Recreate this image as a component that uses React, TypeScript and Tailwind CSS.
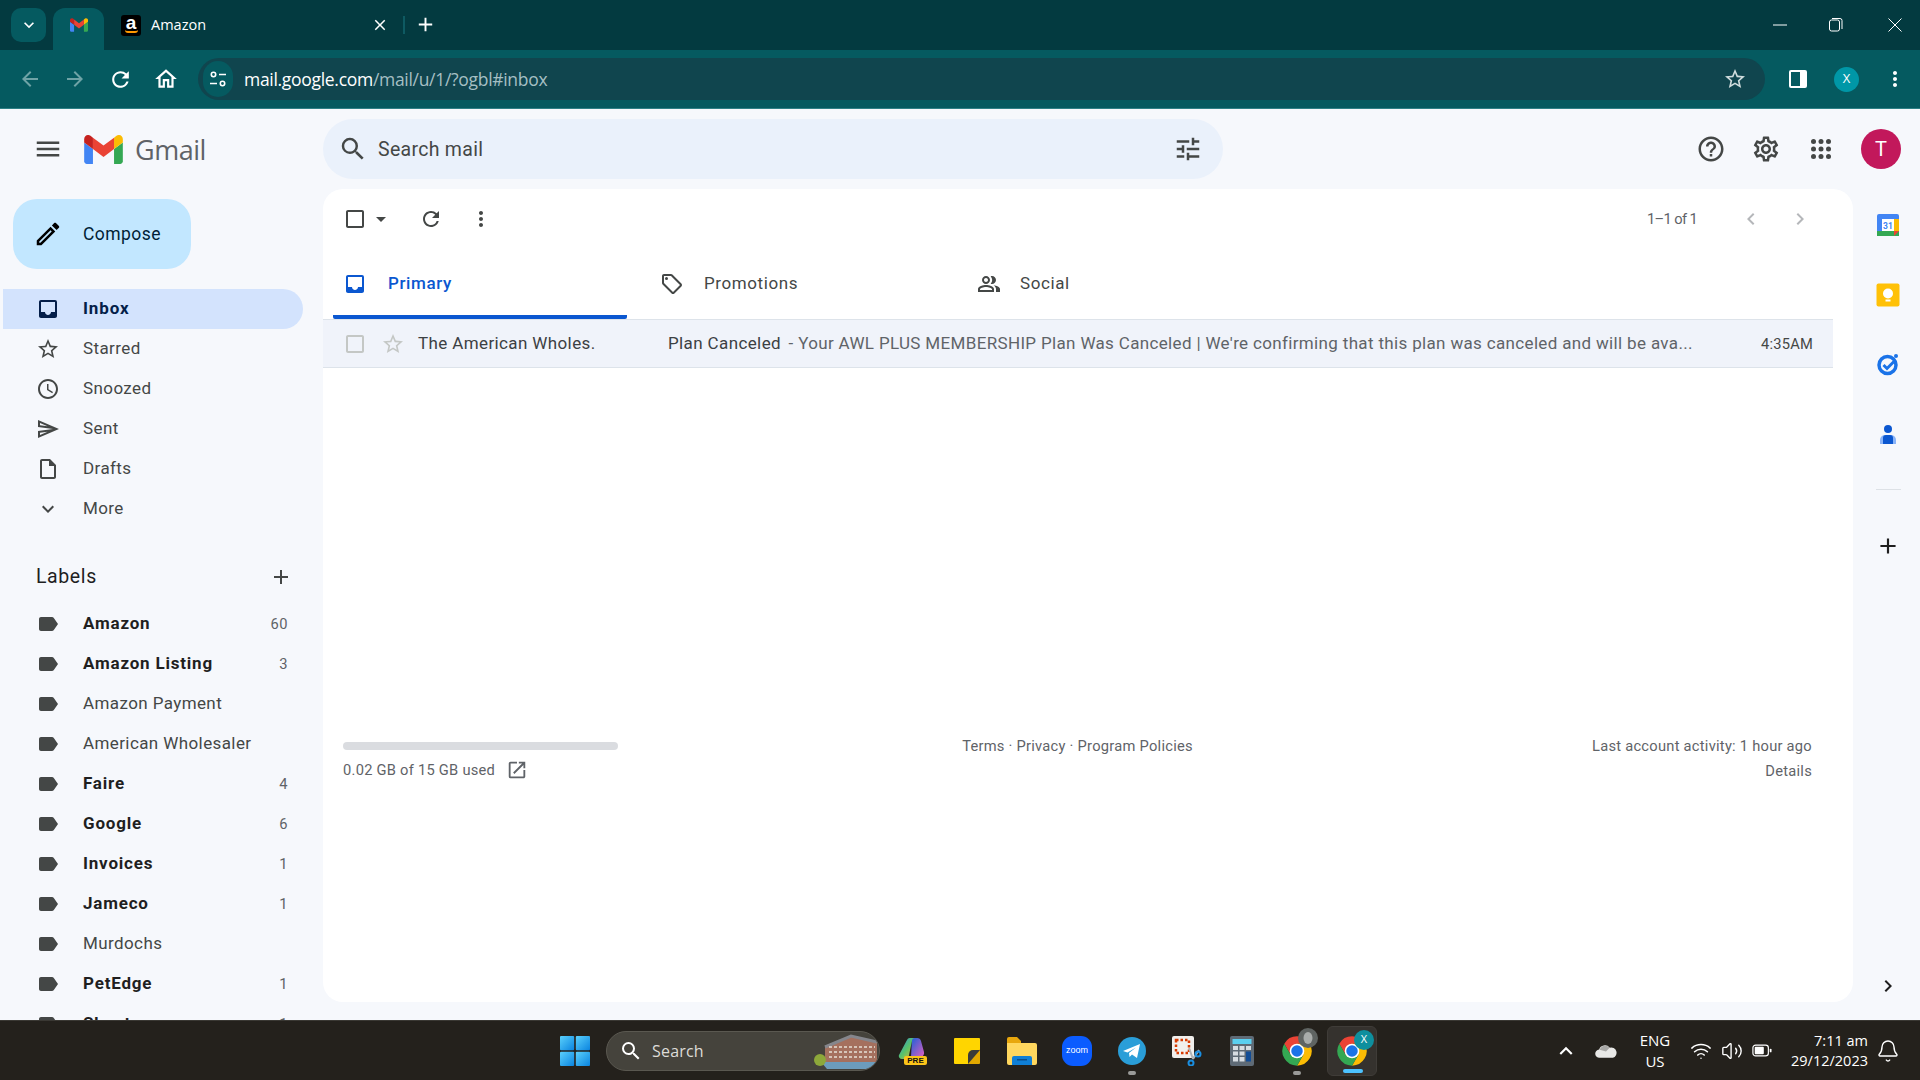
import type { ReactNode } from "react";
import { Bell, Volume2, Wifi } from "lucide-react";
import {
  MdAdd,
  MdArrowBack,
  MdArrowDropDown,
  MdArrowForward,
  MdCheckBoxOutlineBlank,
  MdChevronLeft,
  MdChevronRight,
  MdClose,
  MdExpandMore,
  MdHelpOutline,
  MdInbox,
  MdKeyboardArrowUp,
  MdLabel,
  MdMenu,
  MdMoreVert,
  MdOpenInNew,
  MdOutlineAccessTime,
  MdOutlineCreate,
  MdOutlineHome,
  MdOutlineInsertDriveFile,
  MdOutlineLocalOffer,
  MdOutlinePeopleAlt,
  MdOutlineSend,
  MdOutlineSettings,
  MdRefresh,
  MdSearch,
  MdStarBorder,
  MdTune,
} from "react-icons/md";

const navItems = [
  { name: "Starred", icon: MdStarBorder },
  { name: "Snoozed", icon: MdOutlineAccessTime },
  { name: "Sent", icon: MdOutlineSend },
  { name: "Drafts", icon: MdOutlineInsertDriveFile },
  { name: "More", icon: MdExpandMore },
];

const labels = [
  { name: "Amazon", count: 60 },
  { name: "Amazon Listing", count: 3 },
  { name: "Amazon Payment" },
  { name: "American Wholesaler" },
  { name: "Faire", count: 4 },
  { name: "Google", count: 6 },
  { name: "Invoices", count: 1 },
  { name: "Jameco", count: 1 },
  { name: "Murdochs" },
  { name: "PetEdge", count: 1 },
  { name: "Sheets", count: 1 },
];

function GmailLogo({ className }: { className: string }) {
  return (
    <svg viewBox="52 42 88 66" className={className}>
      <path fill="#4285f4" d="M58 108h14V74L52 59v43c0 3.32 2.69 6 6 6" />
      <path fill="#34a853" d="M120 108h14c3.32 0 6-2.69 6-6V59l-20 15" />
      <path fill="#fbbc04" d="M120 48v26l20-15v-8c0-7.42-8.47-11.65-14.4-7.2" />
      <path fill="#ea4335" d="M72 74V48l24 18 24-18v26L96 92" />
      <path fill="#c5221f" d="M52 51v8l20 15V48l-5.6-4.2c-5.94-4.45-14.4-.22-14.4 7.2" />
    </svg>
  );
}

function ChromeLogo() {
  return (
    <svg viewBox="0 0 24 24" className="w-[32px] h-[32px]">
      <path fill="#ea4335" d="M2.47 6.5A11 11 0 0 1 21.53 6.5H12L7.24 14.75Z" />
      <path fill="#fbbc04" d="M21.53 6.5A11 11 0 0 1 12 23L16.76 14.75 12 6.5Z" />
      <path fill="#34a853" d="M12 23A11 11 0 0 1 2.47 6.5L7.24 14.75H16.76Z" />
      <circle cx="12" cy="12" r="5.5" fill="#fff" />
      <circle cx="12" cy="12" r="4.3" fill="#1a73e8" />
    </svg>
  );
}

function AppsIcon() {
  const spots = [6, 12, 18];
  return (
    <svg viewBox="0 0 24 24" className="ml-[25px] w-[30px] h-[30px]">
      {spots.map((y) =>
        spots.map((x) => <circle key={`${x}-${y}`} cx={x} cy={y} r="2" fill="currentColor" />),
      )}
    </svg>
  );
}

function TabStrip() {
  return (
    <div className="h-[50px] shrink-0 bg-[#033a40] flex items-start text-white font-['Open_Sans',sans-serif]">
      <div className="ml-[11px] mt-[8px] w-[35px] h-[34px] rounded-[10px] bg-[#055a60] flex items-center justify-center">
        <MdExpandMore className="w-[20px] h-[20px]" />
      </div>
      <div className="ml-[7px] mt-[8px] w-[51px] h-[42px] rounded-t-[12px] bg-[#055a60] flex items-start justify-center pt-[10px]">
        <GmailLogo className="w-[18px] h-[14px]" />
      </div>
      <div className="ml-[17px] mt-[15px] w-[20px] h-[21px] rounded-[3px] bg-black flex flex-col items-center leading-none">
        <span className="text-[19px] font-bold leading-[15px] font-['Liberation_Sans',sans-serif]">a</span>
        <span className="w-[13px] h-[3px] border-b-2 border-[#f90] rounded-b-full" />
      </div>
      <span className="ml-[10px] mt-[14px] w-[220px] text-[14.5px] leading-[22px]">Amazon</span>
      <MdClose className="mt-[16px] w-[18px] h-[18px]" />
      <div className="ml-[14px] mt-[16px] w-[2px] h-[18px] bg-[#0e5a62]" />
      <MdAdd className="ml-[9px] mt-[13px] w-[23px] h-[23px]" />
      <div className="ml-auto flex mt-[13px]">
        <svg viewBox="0 0 14 14" className="w-[14px] h-[24px] mr-[42px]">
          <path d="M0 7h14" stroke="#fff" strokeWidth="1" />
        </svg>
        <svg viewBox="0 0 14 14" className="w-[14px] h-[24px] mr-[45px]">
          <rect x="0.5" y="2" width="10" height="11" rx="2" fill="none" stroke="#fff" />
          <path d="M3 0.5h8a2 2 0 0 1 2 2V11" fill="none" stroke="#fff" />
        </svg>
        <svg viewBox="0 0 14 14" className="w-[14px] h-[24px] mr-[18px]">
          <path d="M0.5 0.5l13 13M13.5 0.5l-13 13" stroke="#fff" strokeWidth="1" />
        </svg>
      </div>
    </div>
  );
}

function AddressBar() {
  return (
    <div className="h-[59px] shrink-0 bg-[#055a60] border-b border-[#2d8086] flex items-center text-white font-['Open_Sans',sans-serif]">
      <MdArrowBack className="ml-[18px] w-[24px] h-[24px] text-[#6fa3a6]" />
      <MdArrowForward className="ml-[21px] w-[24px] h-[24px] text-[#6fa3a6]" />
      <MdRefresh className="ml-[21px] w-[25px] h-[25px]" />
      <MdOutlineHome className="ml-[20px] w-[26px] h-[26px]" />
      <div className="ml-[19px] w-[1567px] h-[42px] rounded-full bg-[#10454e] flex items-center">
        <div className="ml-[5px] w-[30px] h-[36px] rounded-full bg-[#055a60] flex items-center justify-center">
          <svg viewBox="0 0 18 18" className="w-[18px] h-[18px]" fill="none" stroke="#fff" strokeWidth="1.6">
            <circle cx="4.5" cy="4.5" r="2.2" />
            <path d="M10 4.5h7M1 13.5h7" />
            <circle cx="13.5" cy="13.5" r="2.2" />
          </svg>
        </div>
        <span className="ml-[11px] text-[17.5px] tracking-[-0.3px]">
          mail.google.com<span className="text-[#a5bfc3]">/mail/u/1/?ogbl#inbox</span>
        </span>
        <MdStarBorder className="ml-auto mr-[18px] w-[24px] h-[24px] text-[#d0dcdd]" />
      </div>
      <div className="ml-[24px] w-[18px] h-[18px] rounded-[2px] bg-white flex">
        <div className="ml-[2px] mt-[2px] w-[9px] h-[14px] bg-[#055a60]" />
      </div>
      <div className="ml-[27px] w-[25px] h-[25px] rounded-full bg-[#0097a7] flex items-center justify-center text-[13px]">
        X
      </div>
      <MdMoreVert className="ml-[24px] w-[24px] h-[24px]" />
    </div>
  );
}

function GmailHeader() {
  return (
    <div className="h-[80px] shrink-0 flex items-center">
      <MdMenu className="ml-[33px] w-[30px] h-[30px] text-[#444746]" />
      <GmailLogo className="ml-[21px] w-[39px] h-[29px]" />
      <span className="ml-[12px] w-[188px] text-[27px] leading-none tracking-[-0.5px] text-[#5f6368] font-['Open_Sans',sans-serif]">
        Gmail
      </span>
      <div className="w-[900px] h-[60px] rounded-[30px] bg-[#eaf1fb] flex items-center">
        <MdSearch className="ml-[15px] w-[30px] h-[30px] text-[#444746]" />
        <span className="ml-[10px] pt-[1px] text-[19.5px] tracking-[0.3px] text-[#444746]">Search mail</span>
        <MdTune className="ml-auto mr-[20px] w-[30px] h-[30px] text-[#444746]" />
      </div>
      <div className="ml-auto flex items-center text-[#444746]">
        <MdHelpOutline className="w-[30px] h-[30px]" />
        <MdOutlineSettings className="ml-[25px] w-[30px] h-[30px]" />
        <AppsIcon />
        <div className="ml-[25px] mr-[19px] w-[40px] h-[40px] rounded-full bg-[#c2185b] flex items-center justify-center text-white text-[20px]">
          T
        </div>
      </div>
    </div>
  );
}

function Sidebar() {
  return (
    <aside className="w-[323px] shrink-0 pt-[10px] overflow-hidden text-[#444746]">
      <div className="ml-[13px] w-[178px] h-[70px] rounded-[24px] bg-[#c2e7ff] flex items-center text-[#001d35]">
        <MdOutlineCreate className="ml-[20px] w-[30px] h-[30px] text-black" />
        <span className="ml-[20px] text-[17.5px] tracking-[0.45px]">Compose</span>
      </div>
      <nav className="mt-[20px]">
        <div className="ml-[3px] w-[300px] h-[40px] rounded-r-full bg-[#d3e3fd] flex items-center text-[#041e49] font-bold">
          <MdInbox className="ml-[33px] w-[24px] h-[24px]" />
          <span className="ml-[23px] text-[17px] tracking-[0.9px]">Inbox</span>
        </div>
        {navItems.map((item) => (
          <div key={item.name} className="ml-[3px] h-[40px] flex items-center">
            <item.icon className="ml-[33px] w-[24px] h-[24px]" />
            <span className="ml-[23px] text-[17px] tracking-[0.4px]">{item.name}</span>
          </div>
        ))}
      </nav>
      {/* Labels */}
      <div className="mt-[28px] h-[40px] flex items-center pl-[36px] pr-[30px] text-[#1f1f1f]">
        <span className="text-[19.5px] tracking-[0.6px]">Labels</span>
        <MdAdd className="ml-auto w-[24px] h-[24px] text-[#444746]" />
      </div>
      <div className="mt-[7px]">
        {labels.map((label) => (
          <div key={label.name} className="h-[40px] flex items-center pr-[35px]">
            <MdLabel className="ml-[36px] w-[24px] h-[24px]" />
            <span
              className={`ml-[23px] text-[17px] ${
                label.count ? "font-bold tracking-[0.8px] text-[#1f1f1f]" : "tracking-[0.4px]"
              }`}
            >
              {label.name}
            </span>
            {label.count && (
              <span className="ml-auto text-[14.7px] tracking-[0.5px] text-[#5f6368]">{label.count}</span>
            )}
          </div>
        ))}
      </div>
    </aside>
  );
}

function Tab({ icon, active, children }: { icon: ReactNode; active?: boolean; children: ReactNode }) {
  return (
    <div
      className={`w-[294px] mr-[22px] h-full pl-[10px] flex items-center gap-[21px] text-[17px] tracking-[0.6px] pb-[6px] border-b-4 rounded-b-[2px] ${
        active ? "border-[#0b57d0] text-[#0b57d0] font-medium" : "border-transparent text-[#444746]"
      }`}
    >
      {icon}
      <span>{children}</span>
    </div>
  );
}

function MailCard() {
  return (
    <main className="flex-1 mb-[18px] rounded-[20px] bg-white flex flex-col text-[#444746]">
      <div className="h-[69px] shrink-0 flex items-center pb-[10px] pr-[41px]">
        <MdCheckBoxOutlineBlank className="ml-[20px] w-[24px] h-[24px]" />
        <MdArrowDropDown className="ml-[2px] w-[24px] h-[24px]" />
        <MdRefresh className="ml-[26px] w-[24px] h-[24px]" />
        <MdMoreVert className="ml-[26px] w-[24px] h-[24px]" />
        <span className="ml-auto pt-[1px] text-[14.7px] tracking-[-0.65px] text-[#5f6368]">1–1 of 1</span>
        <MdChevronLeft className="ml-[42px] w-[24px] h-[24px] text-[#b5b7ba]" />
        <MdChevronRight className="ml-[25px] w-[24px] h-[24px] text-[#b5b7ba]" />
      </div>
      <div className="h-[61px] shrink-0 ml-[10px] flex">
        <Tab active icon={<MdInbox className="w-[24px] h-[24px]" />}>
          Primary
        </Tab>
        <Tab icon={<MdOutlineLocalOffer className="ml-[1px] mr-[-1px] w-[24px] h-[24px]" />}>Promotions</Tab>
        <Tab icon={<MdOutlinePeopleAlt className="ml-[2px] mr-[-2px] w-[24px] h-[24px]" />}>Social</Tab>
      </div>
      {/* Mail row */}
      <div className="h-[49px] shrink-0 mr-[20px] pt-[1px] bg-[#f0f3fa] border-t border-b border-[#dde3ea] flex items-center text-[17px] tracking-[0.38px]">
        <MdCheckBoxOutlineBlank className="ml-[20px] w-[24px] h-[24px] text-[#c4c7c5]" />
        <MdStarBorder className="ml-[14px] w-[24px] h-[24px] text-[#c4c7c5]" />
        <span className="ml-[13px] w-[250px] text-[#3c4043]">The American Wholes.</span>
        <span className="flex-1 truncate text-[#3c4043]">
          Plan Canceled<span className="ml-[3px] tracking-[0.34px] text-[#5f6368]"> - Your AWL PLUS MEMBERSHIP Plan Was Canceled | We're confirming that this plan was canceled and will be ava...</span>
        </span>
        <span className="ml-[66px] mr-[20px] text-[14.7px] tracking-[0.2px] text-[#444746]">4:35AM</span>
      </div>
      {/* Footer */}
      <div className="mt-[366px] ml-[20px] mr-[41px] grid grid-cols-3 text-[14.7px] tracking-[0.25px] text-[#5f6368]">
        <div>
          <div className="mt-[8px] w-[275px] h-[8px] rounded-full bg-[#dadce0]" />
          <div className="mt-[9px] flex items-center">
            0.02 GB of 15 GB used
            <MdOpenInNew className="ml-[11px] w-[22px] h-[22px]" />
          </div>
        </div>
        <div className="pt-[1px] text-center">Terms · Privacy · Program Policies</div>
        <div className="text-right leading-[25px]">
          <div>Last account activity: 1 hour ago</div>
          <div>Details</div>
        </div>
      </div>
    </main>
  );
}

function RightRail() {
  return (
    <aside className="w-[67px] shrink-0 pl-[3px] flex flex-col items-center pb-[22px]">
      {/* Calendar */}
      <svg viewBox="0 0 24 24" className="mt-[24px] w-[24px] h-[24px]">
        <rect x="1" y="1" width="22" height="22" rx="2" fill="#4285f4" />
        <rect x="18" y="6" width="5" height="12" fill="#fbbc04" />
        <rect x="1" y="18" width="22" height="5" fill="#34a853" />
        <path d="M18 18h5l-5 5z" fill="#ea4335" />
        <rect x="6" y="6" width="12" height="12" fill="#fff" />
        <text x="12" y="15.5" fontSize="8.5" fontWeight="700" textAnchor="middle" fill="#4285f4" fontFamily="Roboto, sans-serif">31</text>
      </svg>
      {/* Keep */}
      <svg viewBox="0 0 24 24" className="mt-[46px] w-[24px] h-[24px]">
        <rect x="0.5" y="0.5" width="23" height="23" rx="2" fill="#ffc107" />
        <circle cx="12" cy="10.5" r="5" fill="#fff" />
        <rect x="9.5" y="16.5" width="5" height="2" fill="#fff" />
      </svg>
      {/* Tasks */}
      <svg viewBox="0 0 24 24" className="mt-[45px] w-[24px] h-[24px]">
        <circle cx="11.5" cy="13" r="8.5" fill="none" stroke="#1a73e8" strokeWidth="3.5" />
        <path d="M7.5 13l3.5 3.5 8-8" fill="none" stroke="#1a73e8" strokeWidth="3" />
        <circle cx="20" cy="4" r="2" fill="#1a73e8" />
      </svg>
      {/* Contacts */}
      <svg viewBox="0 0 24 24" className="mt-[47px] w-[24px] h-[24px]">
        <circle cx="12" cy="6" r="4" fill="#0b57d0" />
        <path d="M4 21v-4a5 5 0 0 1 5-5h6a5 5 0 0 1 5 5v4z" fill="#8ab4f8" />
        <path d="M7 21v-6a3 3 0 0 1 3-3h4a3 3 0 0 1 3 3v6z" fill="#0b57d0" />
      </svg>
      <div className="mt-[42px] w-[25px] h-px bg-[#dde1e6]" />
      <MdAdd className="mt-[43px] w-[26px] h-[26px] text-[#1f1f1f]" />
      <MdChevronRight className="mt-auto w-[24px] h-[24px] text-[#1f1f1f]" />
    </aside>
  );
}

function Taskbar() {
  return (
    <footer className="h-[60px] shrink-0 bg-[#24211c] border-t border-[#3a3833] flex items-center text-white font-['Open_Sans',sans-serif] relative">
      {/* Start */}
      <svg viewBox="0 0 30 30" className="ml-[560px] w-[30px] h-[30px]">
        <defs>
          <linearGradient id="win" x1="0" y1="0" x2="1" y2="1">
            <stop offset="0" stopColor="#5ad0fb" />
            <stop offset="1" stopColor="#0a84e0" />
          </linearGradient>
        </defs>
        <rect x="0" y="0" width="14.2" height="14.2" rx="1" fill="url(#win)" />
        <rect x="15.8" y="0" width="14.2" height="14.2" rx="1" fill="url(#win)" />
        <rect x="0" y="15.8" width="14.2" height="14.2" rx="1" fill="url(#win)" />
        <rect x="15.8" y="15.8" width="14.2" height="14.2" rx="1" fill="url(#win)" />
      </svg>
      {/* Search */}
      <div className="ml-[16px] w-[274px] h-[40px] rounded-full bg-[#45433c] border border-[#5a5850] flex items-center overflow-hidden">
        <MdSearch className="ml-[12px] w-[24px] h-[24px]" />
        <span className="ml-[9px] text-[16px] tracking-[0.2px] text-[#dddcd8]">Search</span>
        <svg viewBox="0 0 68 36" className="ml-auto w-[68px] h-[36px]">
          <path d="M14 14L40 3 66 9V29H14Z" fill="#a5705e" />
          <path d="M14 14L40 3 66 9" fill="none" stroke="#85868c" strokeWidth="3" />
          <path d="M18 14H64M18 19H64M18 24H64" stroke="#e6e0d6" strokeWidth="1.6" strokeDasharray="3 2" />
          <path d="M10 29H66L60 36H16Z" fill="#6c9cbc" />
          <circle cx="9" cy="27" r="6" fill="#8da83a" />
        </svg>
      </div>
      {/* Copilot */}
      <div className="ml-[18px] w-[28px] h-[28px] relative">
        <svg viewBox="0 0 28 28" className="w-full h-full">
          <defs>
            <linearGradient id="cop" x1="0" y1="0" x2="1" y2="1">
              <stop offset="0" stopColor="#2f8fe6" />
              <stop offset="0.5" stopColor="#58c26a" />
              <stop offset="1" stopColor="#e9b535" />
            </linearGradient>
            <linearGradient id="cop2" x1="0" y1="0" x2="1" y2="1">
              <stop offset="0" stopColor="#1b60d8" />
              <stop offset="1" stopColor="#e05fc0" />
            </linearGradient>
          </defs>
          <path d="M14 1h5a4 4 0 0 1 4 3l3 11a4 4 0 0 1-4 5h-9z" fill="url(#cop2)" />
          <path d="M9 3a3 3 0 0 1 3-2h5a3 3 0 0 0-3 3l-3 14a4 4 0 0 1-4 4H4a3 3 0 0 1-3-4z" fill="url(#cop)" />
        </svg>
        <span className="absolute left-[6px] top-[19px] w-[23px] h-[9px] rounded-[2px] bg-[#fcc419] text-[#111] text-[8px] font-bold leading-[9px] text-center font-['Liberation_Sans',sans-serif]">
          PRE
        </span>
      </div>
      {/* Sticky notes */}
      <svg viewBox="0 0 26 26" className="ml-[28px] w-[26px] h-[26px]">
        <path d="M1 0h24a1 1 0 0 1 1 1v15L16 26H1a1 1 0 0 1-1-1V1a1 1 0 0 1 1-1z" fill="#ffd500" />
        <path d="M26 11v14a1 1 0 0 1-1 1H14z" fill="#e2a800" />
        <path d="M26 12L14 26V17a5 5 0 0 1 5-5z" fill="#3a3a3a" />
      </svg>
      {/* Explorer */}
      <svg viewBox="0 0 30 28" className="ml-[27px] w-[30px] h-[28px]">
        <path d="M0 2a2 2 0 0 1 2-2h8l4 4v6H0z" fill="#e8a70d" />
        <path d="M0 6h28a2 2 0 0 1 2 2v18a2 2 0 0 1-2 2H2a2 2 0 0 1-2-2z" fill="#ffd75e" />
        <path d="M5 21a2 2 0 0 1 2-2h16a2 2 0 0 1 2 2v7H5z" fill="#0f7fd6" />
        <rect x="10" y="22" width="10" height="1.5" fill="#0a4f8c" />
      </svg>
      {/* Zoom */}
      <div className="ml-[25px] w-[30px] h-[30px] rounded-[11px] bg-[#0b5cff] flex items-center justify-center text-[9px] font-['Liberation_Sans',sans-serif]">
        zoom
      </div>
      {/* Telegram */}
      <div className="ml-[26px] relative">
        <svg viewBox="0 0 28 28" className="w-[28px] h-[28px]">
          <circle cx="14" cy="14" r="14" fill="#2a9ed8" />
          <path d="M5 14L22 7 19 21 14 17.5 11.5 20 11 16 18 10.5 9.5 15.5z" fill="#fff" />
        </svg>
        <span className="absolute left-[10px] top-[34px] w-[8px] h-[4px] rounded-full bg-[#9a9a98]" />
      </div>
      {/* Snipping tool */}
      <svg viewBox="0 0 30 30" className="ml-[26px] w-[30px] h-[30px]">
        <rect x="0" y="0" width="22" height="22" rx="2" fill="#f1efec" />
        <rect x="4" y="4" width="13" height="13" fill="none" stroke="#d83b01" strokeWidth="2.5" strokeDasharray="2.5 2" />
        <path d="M17 12l4 11M27 14l-6 9" stroke="#b0b3b6" strokeWidth="2" />
        <circle cx="26" cy="18" r="2.5" fill="none" stroke="#1a8ee0" strokeWidth="2" />
        <circle cx="19" cy="27" r="2.5" fill="none" stroke="#1a8ee0" strokeWidth="2" />
      </svg>
      {/* Calculator */}
      <svg viewBox="0 0 24 30" className="ml-[28px] w-[24px] h-[30px]">
        <rect width="24" height="30" rx="2" fill="#5f6b76" />
        <rect x="2.5" y="3" width="19" height="5" fill="#5bd0f0" />
        <path d="M3 10h5v4H3zM9.5 10h5v4h-5zM16 10h5v4h-5zM3 15.5h5v4H3zM9.5 15.5h5v4h-5zM3 21h5v4.5H3zM9.5 21h5v4.5h-5z" fill="#d7dde2" />
        <rect x="16" y="15.5" width="5" height="10" fill="#124d96" />
      </svg>
      {/* Chrome with profile */}
      <div className="ml-[27px] w-[32px] h-[32px] relative">
        <ChromeLogo />
        <svg viewBox="0 0 20 20" className="absolute left-[17px] top-[-7px] w-[20px] h-[20px]">
          <circle cx="10" cy="10" r="10" fill="#5f6462" />
          <ellipse cx="10" cy="10" rx="4.5" ry="6" fill="#a9adab" />
        </svg>
        <span className="absolute left-[12px] top-[36px] w-[8px] h-[4px] rounded-full bg-[#9a9a98]" />
      </div>
      {/* Active chrome */}
      <div className="ml-[14px] w-[50px] h-[50px] rounded-[6px] bg-[#35322e] border border-[#3f3c38] flex items-center justify-center relative">
        <ChromeLogo />
        <span className="absolute left-[26px] top-[3px] w-[20px] h-[20px] rounded-full bg-[#0e8f9e] flex items-center justify-center text-[11px]">
          X
        </span>
        <span className="absolute left-[15px] bottom-[2px] w-[20px] h-[4px] rounded-full bg-[#4cc2ff]" />
      </div>
      {/* Tray */}
      <MdKeyboardArrowUp className="ml-[176px] w-[26px] h-[26px]" />
      <svg viewBox="0 0 24 16" className="ml-[16px] w-[22px] h-[15px]">
        <path d="M5 16a4.5 4.5 0 0 1-.5-9A6.5 6.5 0 0 1 16 5a5.5 5.5 0 0 1 3.5 11z" fill="#e8e8e6" />
        <path d="M5 7.2A6.5 6.5 0 0 1 16 5l-4 4z" fill="#a8a8a6" />
      </svg>
      <div className="ml-[18px] w-[40px] text-center text-[15px] leading-[21px]">
        <div>ENG</div>
        <div>US</div>
      </div>
      <Wifi className="ml-[15px] w-[22px] h-[22px]" strokeWidth={1.7} />
      <Volume2 className="ml-[9px] w-[22px] h-[22px]" strokeWidth={1.5} />
      <svg viewBox="0 0 22 14" className="ml-[9px] w-[20px] h-[13px]">
        <rect x="1" y="1" width="17" height="12" rx="3" fill="none" stroke="#fff" strokeWidth="1.3" />
        <rect x="3" y="3" width="10" height="8" rx="1" fill="#fff" />
        <rect x="19.5" y="5" width="2" height="4" rx="1" fill="#fff" />
      </svg>
      <div className="ml-auto text-right text-[14.5px] leading-[20px]">
        <div>7:11 am</div>
        <div>29/12/2023</div>
      </div>
      <Bell className="ml-[8px] mr-[20px] w-[24px] h-[24px]" strokeWidth={1.4} />
    </footer>
  );
}

export default function App() {
  return (
    <div className="w-[1920px] h-[1080px] flex flex-col overflow-hidden bg-[#f6f8fc] font-['Roboto',sans-serif]">
      <TabStrip />
      <AddressBar />
      <GmailHeader />
      <div className="flex-1 min-h-0 flex">
        <Sidebar />
        <MailCard />
        <RightRail />
      </div>
      <Taskbar />
    </div>
  );
}
